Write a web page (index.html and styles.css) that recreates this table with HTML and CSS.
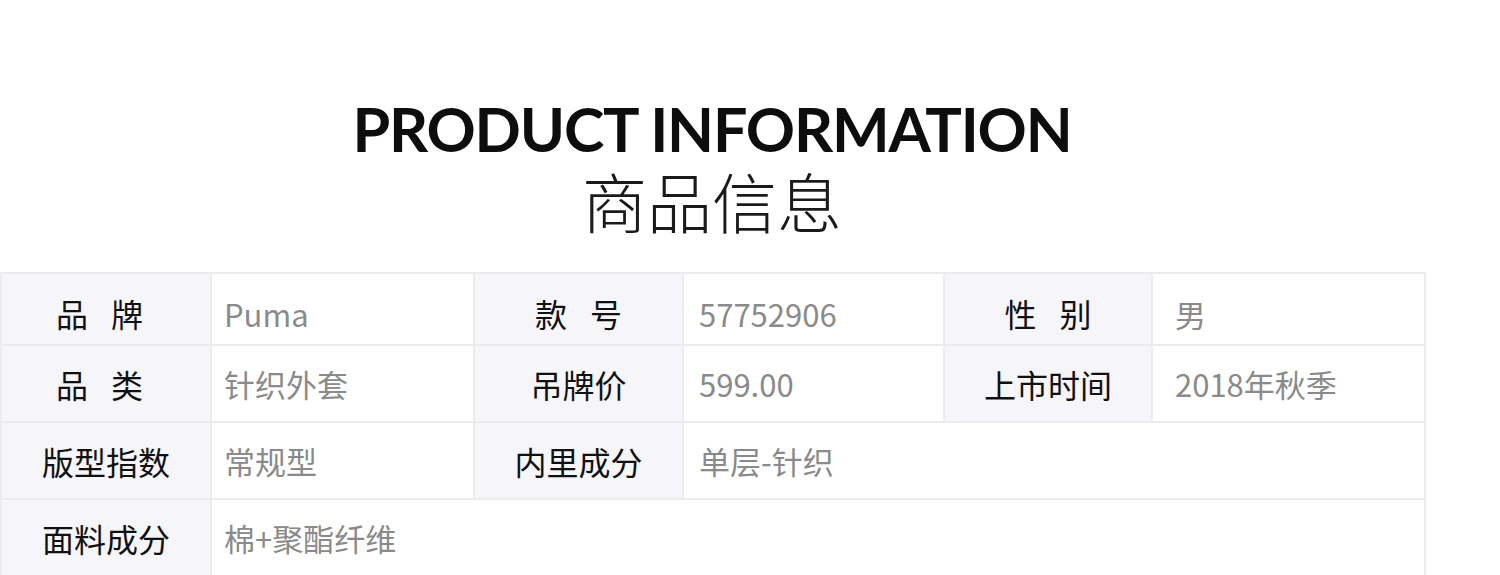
FILE: index.html
```html
<!DOCTYPE html>
<html lang="zh-CN">
<head>
    <meta charset="UTF-8">
    <meta name="viewport" content="width=device-width, initial-scale=1.0">
    <link rel="stylesheet" href="styles.css">
</head>
<body>
    <div class="page">
        <div class="title">
            <h1>PRODUCT INFORMATION</h1>
            <h2>商品信息</h2>
        </div>
        <table class="info">
            <colgroup>
                <col class="c-label1">
                <col class="c-value1">
                <col class="c-label2">
                <col class="c-value2">
                <col class="c-label3">
                <col class="c-value3">
            </colgroup>
            <tr class="first">
                <th class="spaced left">品牌</th>
                <td class="v1">Puma</td>
                <th class="spaced">款号</th>
                <td>57752906</td>
                <th class="spaced">性别</th>
                <td class="v3">男</td>
            </tr>
            <tr>
                <th class="spaced left">品类</th>
                <td class="v1">针织外套</td>
                <th>吊牌价</th>
                <td>599.00</td>
                <th>上市时间</th>
                <td class="v3">2018年秋季</td>
            </tr>
            <tr>
                <th>版型指数</th>
                <td class="v1">常规型</td>
                <th>内里成分</th>
                <td colspan="3">单层-针织</td>
            </tr>
            <tr>
                <th>面料成分</th>
                <td class="v1" colspan="5">棉+聚酯纤维</td>
            </tr>
        </table>
    </div>
</body>
</html>
```

FILE: styles.css
```css
body {
    margin: 0;
    padding: 0;
    background-color: #ffffff;
    font-family: "Noto Sans CJK SC", "Noto Sans", sans-serif;
}

.page {
    width: 1424px;
}

.title {
    padding-top: 98px;
    text-align: center;
}

.title h1 {
    margin: 0;
    font-family: Lato, "Liberation Sans", sans-serif;
    font-weight: 700;
    font-size: 61px;
    line-height: 61px;
    color: #0d0d0d;
    letter-spacing: -1.2px;
}

.title h2 {
    margin: 9px 0 0 0;
    font-family: "Noto Sans CJK SC", sans-serif;
    font-weight: 300;
    font-size: 65px;
    line-height: 64px;
    color: #1a1a1a;
}

.info {
    margin-top: 40px;
    width: 1424px;
    table-layout: fixed;
    border-collapse: collapse;
}

.c-label1 { width: 210px; }
.c-value1 { width: 263px; }
.c-label2 { width: 209px; }
.c-value2 { width: 261px; }
.c-label3 { width: 208px; }
.c-value3 { width: 273px; }

.info tr {
    height: 77px;
}

.info tr.first {
    height: 72px;
}

.info tr.first th,
.info tr.first td {
    padding-top: 8px;
}

.info th,
.info td {
    border: 2px solid #ececec;
    padding: 0;
}

.info th {
    background-color: #f6f5fa;
    color: #111111;
    font-size: 32px;
    font-weight: 400;
    text-align: center;
}

.info td {
    background-color: #ffffff;
    color: #8a8a8a;
    font-size: 31px;
    text-align: left;
    padding-left: 15px;
}

.info td.v1 {
    padding-left: 12px;
}

.info td.v3 {
    padding-left: 22px;
}

.info th.spaced {
    letter-spacing: 23px;
    text-indent: 23px;
}

.info th.spaced.left {
    text-indent: 10px;
}
```
